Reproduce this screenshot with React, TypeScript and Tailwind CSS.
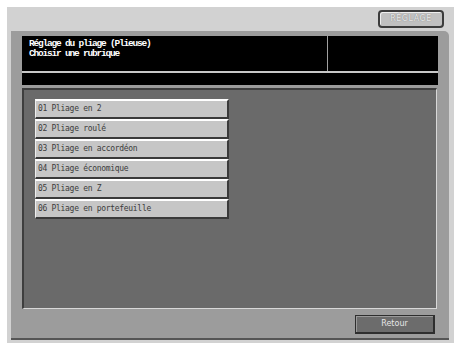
import React from "react";

const items = [
  "01 Pliage en 2",
  "02 Pliage roulé",
  "03 Pliage en accordéon",
  "04 Pliage économique",
  "05 Pliage en Z",
  "06 Pliage en portefeuille",
];

export default function App() {
  return (
    <div className="w-[454px] h-[343px] bg-white pl-[7px] pt-[7px] overflow-hidden">
      <div className="w-[447px] h-[336px] bg-[#d2d2d2] flex flex-col">
        <div className="h-[24px] flex justify-end items-start pt-[3px] pr-[10px]">
          <div className="w-[66px] h-[18px] rounded-[4px] border-2 border-[#3c3c3c] bg-[#c0c0c0] flex items-center justify-center shadow-[inset_1px_1px_0_#eeeeee]">
            <span className="text-[8px] text-[#ececec] tracking-[0.5px] [font-family:'DejaVu_Sans',sans-serif] [text-shadow:0_0_1px_#666]">RÉGLAGE</span>
          </div>
        </div>
        <div className="ml-[4px] w-[438px] h-[309px] bg-[#9c9c9c] rounded-tr-[5px] border-b-2 border-[#555] px-[11px] pt-[5px] flex flex-col">
          <div className="h-[35px] bg-black flex">
            <div className="w-[306px] border-r border-[#a0a0a0] pl-[7px] pt-[3px] text-white text-[9.5px] leading-[9.5px] tracking-[-1.2px] font-bold [font-family:'Liberation_Mono',monospace]">
              <div>Réglage du pliage (Plieuse)</div>
              <div>Choisir une rubrique</div>
            </div>
            <div className="flex-1" />
          </div>
          <div className="h-[2px] bg-[#c8c8c8]" />
          <div className="h-[12px] bg-black" />
          <div className="h-[3px]" />
          <div className="h-[221px] w-[415px] bg-[#6a6a6a] border-t-2 border-l-2 border-[#3e3e3e] border-r border-b border-r-[#d8d8d8] border-b-[#d8d8d8] pl-[11px] pt-[9px] flex flex-col">
            {items.map((t) => (
              <div
                key={t}
                className="w-[194px] h-[20px] bg-[#c6c6c6] border-t-2 border-l border-t-white border-l-[#eeeeee] border-r-2 border-b-2 border-r-[#3a3a3a] border-b-[#3a3a3a] flex items-center pl-[2px]"
              >
                <span className="text-[8px] text-[#3c3c3c] [font-family:'DejaVu_Sans_Mono',monospace] tracking-[-0.3px]">{t}</span>
              </div>
            ))}
          </div>
          <div className="flex justify-end pt-[6px] pr-[3px]">
            <div className="w-[80px] h-[19px] bg-[#6c6c6c] border border-[#2e2e2e] border-r-2 border-b-2 shadow-[inset_1px_1px_0_#9a9a9a] flex items-center justify-center">
              <span className="text-[8px] text-[#e6e6e6] [font-family:'DejaVu_Sans',sans-serif]">Retour</span>
            </div>
          </div>
        </div>
      </div>
    </div>
  );
}
